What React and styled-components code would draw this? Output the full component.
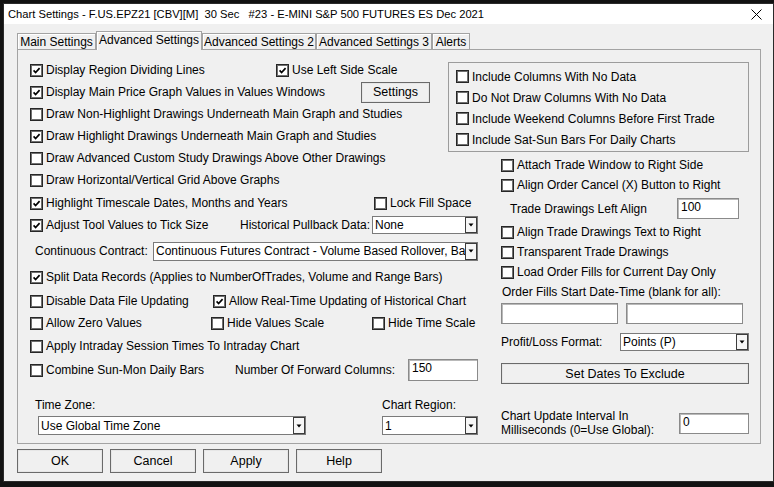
import React from "react";
import styled, { createGlobalStyle } from "styled-components";

const GlobalStyle = createGlobalStyle`
  * {
    box-sizing: border-box;
  }

  body {
    margin: 0;
    background: #121212;
    font-family: "Liberation Sans", Arial, sans-serif;
    font-size: 12px;
    color: #000;
  }
`;

const Screen = styled.div`
  padding: 4px 1px 6px 4px;
`;

const Window = styled.div`
  width: 769px;
  height: 477px;
  background: #f0f0f0;
  display: flex;
  flex-direction: column;
  box-shadow: 0 0 0 1px #2a2a2a;
`;

const TitleBar = styled.div`
  height: 20px;
  flex-shrink: 0;
  background: #fff;
  display: flex;
  align-items: center;
  justify-content: space-between;
  padding: 0 11px 0 4px;

  & > span {
    font-size: 11.2px;
    white-space: pre;
  }
`;

const Body = styled.div`
  flex: 1;
  display: flex;
  flex-direction: column;
  padding: 7px 11px 8px 13px;
`;

const TabStrip = styled.div`
  display: flex;
  align-items: flex-end;
  height: 18px;
  flex-shrink: 0;
`;

const Tab = styled.div`
  width: ${({ $w }) => $w}px;
  flex-shrink: 0;
  height: ${({ $active }) => ($active ? 19 : 16)}px;
  margin-bottom: ${({ $active }) => ($active ? -1 : 0)}px;
  position: relative;
  z-index: ${({ $active }) => ($active ? 1 : 0)};
  background: #f0f0f0;
  border: 1px solid #a3a3a3;
  border-bottom: none;
  box-shadow: inset 1px 1px 0 #fff;
  display: flex;
  align-items: center;
  justify-content: center;
  padding-bottom: ${({ $active }) => ($active ? 2 : 0)}px;
  white-space: nowrap;
`;

const Panel = styled.div`
  width: 744px;
  height: 395px;
  flex-shrink: 0;
  border: 1px solid #a3a3a3;
  padding: 9px 0 0 12px;
  display: flex;
  align-items: flex-start;
`;

const LeftCol = styled.div`
  flex: 0 0 448px;
  display: flex;
  flex-direction: column;
`;

const RightCol = styled.div`
  flex: 0 0 301px;
  margin-left: -30px;
  display: flex;
  flex-direction: column;
`;

const Row = styled.div`
  display: flex;
  align-items: center;
  flex-shrink: 0;
  height: ${({ $h }) => $h || 22}px;
  margin-top: ${({ $mt }) => $mt || 0}px;
  padding-left: ${({ $pl }) => $pl || 0}px;
  white-space: nowrap;
`;

const CheckLabel = styled.label`
  display: flex;
  align-items: center;
  gap: 3px;
  flex-shrink: 0;
  width: ${({ $w }) => ($w ? `${$w}px` : "auto")};
  white-space: nowrap;
`;

const Box = styled.span`
  width: 13px;
  height: 13px;
  flex-shrink: 0;
  background: #fff;
  border: 1px solid #262626;
  box-shadow: inset 0 0 0 1px #707070;
  display: flex;
  align-items: center;
  justify-content: center;
`;

const Text = styled.span`
  flex-shrink: 0;
  width: ${({ $w }) => ($w ? `${$w}px` : "auto")};
  padding-left: ${({ $pl }) => $pl || 0}px;
  line-height: 14px;
  white-space: nowrap;
`;

const Button = styled.div`
  width: ${({ $w }) => $w}px;
  height: ${({ $h }) => $h}px;
  flex-shrink: 0;
  background: #f0f0f0;
  border: 1px solid #6a6a6a;
  box-shadow: inset 0 0 0 1px #e6e6e6;
  display: flex;
  align-items: center;
  justify-content: center;
  font-size: 12.5px;
`;

const Edit = styled.div`
  width: ${({ $w }) => $w}px;
  height: ${({ $h }) => $h || 21}px;
  flex-shrink: 0;
  margin-left: ${({ $ml }) => $ml || 0}px;
  background: #fff;
  border: 1px solid #8a8a8a;
  box-shadow: inset 1px 1px 0 #b9b9b9;
  padding: 1px 3px;
  line-height: 14px;
`;

const Combo = styled.div`
  width: ${({ $w }) => $w}px;
  height: ${({ $h }) => $h || 18}px;
  flex-shrink: 0;
  margin-left: ${({ $ml }) => $ml || 0}px;
  background: #fff;
  border: 1px solid #7a7a7a;
  display: flex;
  align-items: stretch;
`;

const ComboText = styled.div`
  flex: 1;
  overflow: hidden;
  white-space: nowrap;
  padding-left: 2px;
  display: flex;
  align-items: center;
`;

const ComboArrow = styled.div`
  flex: 0 0 12px;
  border: 1px solid #3c3c3c;
  background: #f6f6f6;
  display: flex;
  align-items: center;
  justify-content: center;
`;

const GroupBox = styled.div`
  height: 90px;
  flex-shrink: 0;
  margin-top: 3px;
  border: 1px solid #9c9c9c;
  padding: 3px 0 0 7px;
  display: flex;
  flex-direction: column;
`;

const Indent = styled.div`
  padding-left: 53px;
  display: flex;
  flex-direction: column;
`;

const FieldRow = styled.div`
  display: flex;
  flex-shrink: 0;
  margin-top: ${({ $mt }) => $mt || 0}px;
`;

const Field = styled.div`
  flex: 0 0 ${({ $w }) => ($w ? `${$w}px` : "auto")};
  display: flex;
  flex-direction: column;
  align-items: flex-start;
  gap: 4px;
`;

const TwoLine = styled.div`
  line-height: 14px;
  width: 178px;
  flex-shrink: 0;
`;

const ButtonBar = styled.div`
  display: flex;
  gap: 7px;
  margin-top: 5px;
`;

const CheckMark = () => (
  <svg width="9" height="9" viewBox="0 0 9 9">
    <path d="M1.6 4.4 L3.6 6.5 L7.6 2.2" fill="none" stroke="#000" strokeWidth="1.7" />
  </svg>
);

const Check = ({ label, checked, w }) => (
  <CheckLabel $w={w}>
    <Box>{checked && <CheckMark />}</Box>
    <span>{label}</span>
  </CheckLabel>
);

const Dropdown = ({ value, w, h, ml }) => (
  <Combo $w={w} $h={h} $ml={ml}>
    <ComboText>{value}</ComboText>
    <ComboArrow>
      <svg width="6" height="4" viewBox="0 0 6 4">
        <path d="M0.5 0.5 H5.5 L3 3.5 Z" fill="#000" />
      </svg>
    </ComboArrow>
  </Combo>
);

const CloseIcon = () => (
  <svg width="11" height="11" viewBox="0 0 11 11">
    <path d="M0.5 0.5 L10.5 10.5 M10.5 0.5 L0.5 10.5" stroke="#000" strokeWidth="1" />
  </svg>
);

const tabs = [
  { label: "Main Settings", w: 79 },
  { label: "Advanced Settings", w: 106, active: true },
  { label: "Advanced Settings 2", w: 114 },
  { label: "Advanced Settings 3", w: 116 },
  { label: "Alerts", w: 38 },
];

const App = () => {
  return (
    <Screen>
      <GlobalStyle />
      <Window>
        <TitleBar>
          <span>Chart Settings - F.US.EPZ21 [CBV][M]  30 Sec   #23 - E-MINI S&amp;P 500 FUTURES ES Dec 2021</span>
          <CloseIcon />
        </TitleBar>
        <Body>
          <TabStrip>
            {tabs.map((t) => (
              <Tab key={t.label} $w={t.w} $active={t.active}>
                {t.label}
              </Tab>
            ))}
          </TabStrip>
          <Panel>
            <LeftCol>
              <Row>
                <Check checked w={246} label="Display Region Dividing Lines" />
                <Check checked label="Use Left Side Scale" />
              </Row>
              <Row>
                <Check checked w={331} label="Display Main Price Graph Values in Values Windows" />
                <Button $w={69} $h={21}>Settings</Button>
              </Row>
              <Row>
                <Check label="Draw Non-Highlight Drawings Underneath Main Graph and Studies" />
              </Row>
              <Row>
                <Check checked label="Draw Highlight Drawings Underneath Main Graph and Studies" />
              </Row>
              <Row>
                <Check label="Draw Advanced Custom Study Drawings Above Other Drawings" />
              </Row>
              <Row>
                <Check label="Draw Horizontal/Vertical Grid Above Graphs" />
              </Row>
              <Row $mt={1}>
                <Check checked w={344} label="Highlight Timescale Dates, Months and Years" />
                <Check label="Lock Fill Space" />
              </Row>
              <Row>
                <Check checked w={210} label="Adjust Tool Values to Tick Size" />
                <Text $w={132}>Historical Pullback Data:</Text>
                <Dropdown value="None" w={106} />
              </Row>
              <Row $mt={4}>
                <Text $w={123} $pl={5}>Continuous Contract:</Text>
                <Dropdown
                  value="Continuous Futures Contract - Volume Based Rollover, Back Adjusted"
                  w={325}
                  h={19}
                />
              </Row>
              <Row $mt={4}>
                <Check checked label="Split Data Records (Applies to NumberOfTrades, Volume and Range Bars)" />
              </Row>
              <Row $mt={2}>
                <Check w={183} label="Disable Data File Updating" />
                <Check checked label="Allow Real-Time Updating of Historical Chart" />
              </Row>
              <Row>
                <Check w={181} label="Allow Zero Values" />
                <Check w={161} label="Hide Values Scale" />
                <Check label="Hide Time Scale" />
              </Row>
              <Row $mt={1}>
                <Check label="Apply Intraday Session Times To Intraday Chart" />
              </Row>
              <Row $mt={2}>
                <Check w={205} label="Combine Sun-Mon Daily Bars" />
                <Text $w={173}>Number Of Forward Columns:</Text>
                <Edit $w={70} $h={22}>150</Edit>
              </Row>
              <FieldRow $mt={17}>
                <Field $w={352}>
                  <Text $pl={5}>Time Zone:</Text>
                  <Dropdown value="Use Global Time Zone" w={268} h={19} ml={8} />
                </Field>
                <Field>
                  <Text>Chart Region:</Text>
                  <Dropdown value="1" w={96} h={19} />
                </Field>
              </FieldRow>
            </LeftCol>

            <RightCol>
              <GroupBox>
                <Row $h={21}>
                  <Check label="Include Columns With No Data" />
                </Row>
                <Row $h={21}>
                  <Check label="Do Not Draw Columns With No Data" />
                </Row>
                <Row $h={21}>
                  <Check label="Include Weekend Columns Before First Trade" />
                </Row>
                <Row $h={21}>
                  <Check label="Include Sat-Sun Bars For Daily Charts" />
                </Row>
              </GroupBox>
              <Indent>
                <Row $h={20} $mt={3}>
                  <Check label="Attach Trade Window to Right Side" />
                </Row>
                <Row $h={20}>
                  <Check label="Align Order Cancel (X) Button to Right" />
                </Row>
                <Row $h={21} $mt={3} $pl={9}>
                  <Text $w={167}>Trade Drawings Left Align</Text>
                  <Edit $w={62}>100</Edit>
                </Row>
                <Row $h={20} $mt={3}>
                  <Check label="Align Trade Drawings Text to Right" />
                </Row>
                <Row $h={20}>
                  <Check label="Transparent Trade Drawings" />
                </Row>
                <Row $h={20}>
                  <Check label="Load Order Fills for Current Day Only" />
                </Row>
                <Row $h={16} $mt={2} $pl={1}>
                  <Text>Order Fills Start Date-Time (blank for all):</Text>
                </Row>
                <Row $h={21} $mt={3}>
                  <Edit $w={117} />
                  <Edit $w={117} $ml={8} />
                </Row>
                <Row $h={18} $mt={9}>
                  <Text $w={119}>Profit/Loss Format:</Text>
                  <Dropdown value="Points (P)" w={129} />
                </Row>
                <Row $h={21} $mt={12}>
                  <Button $w={248} $h={21}>Set Dates To Exclude</Button>
                </Row>
                <Row $h={28} $mt={25}>
                  <TwoLine>
                    Chart Update Interval In
                    <br />
                    Milliseconds (0=Use Global):
                  </TwoLine>
                  <Edit $w={70}>0</Edit>
                </Row>
              </Indent>
            </RightCol>
          </Panel>
          <ButtonBar>
            <Button $w={86} $h={24}>OK</Button>
            <Button $w={86} $h={24}>Cancel</Button>
            <Button $w={86} $h={24}>Apply</Button>
            <Button $w={86} $h={24}>Help</Button>
          </ButtonBar>
        </Body>
      </Window>
    </Screen>
  );
};

export default App;
